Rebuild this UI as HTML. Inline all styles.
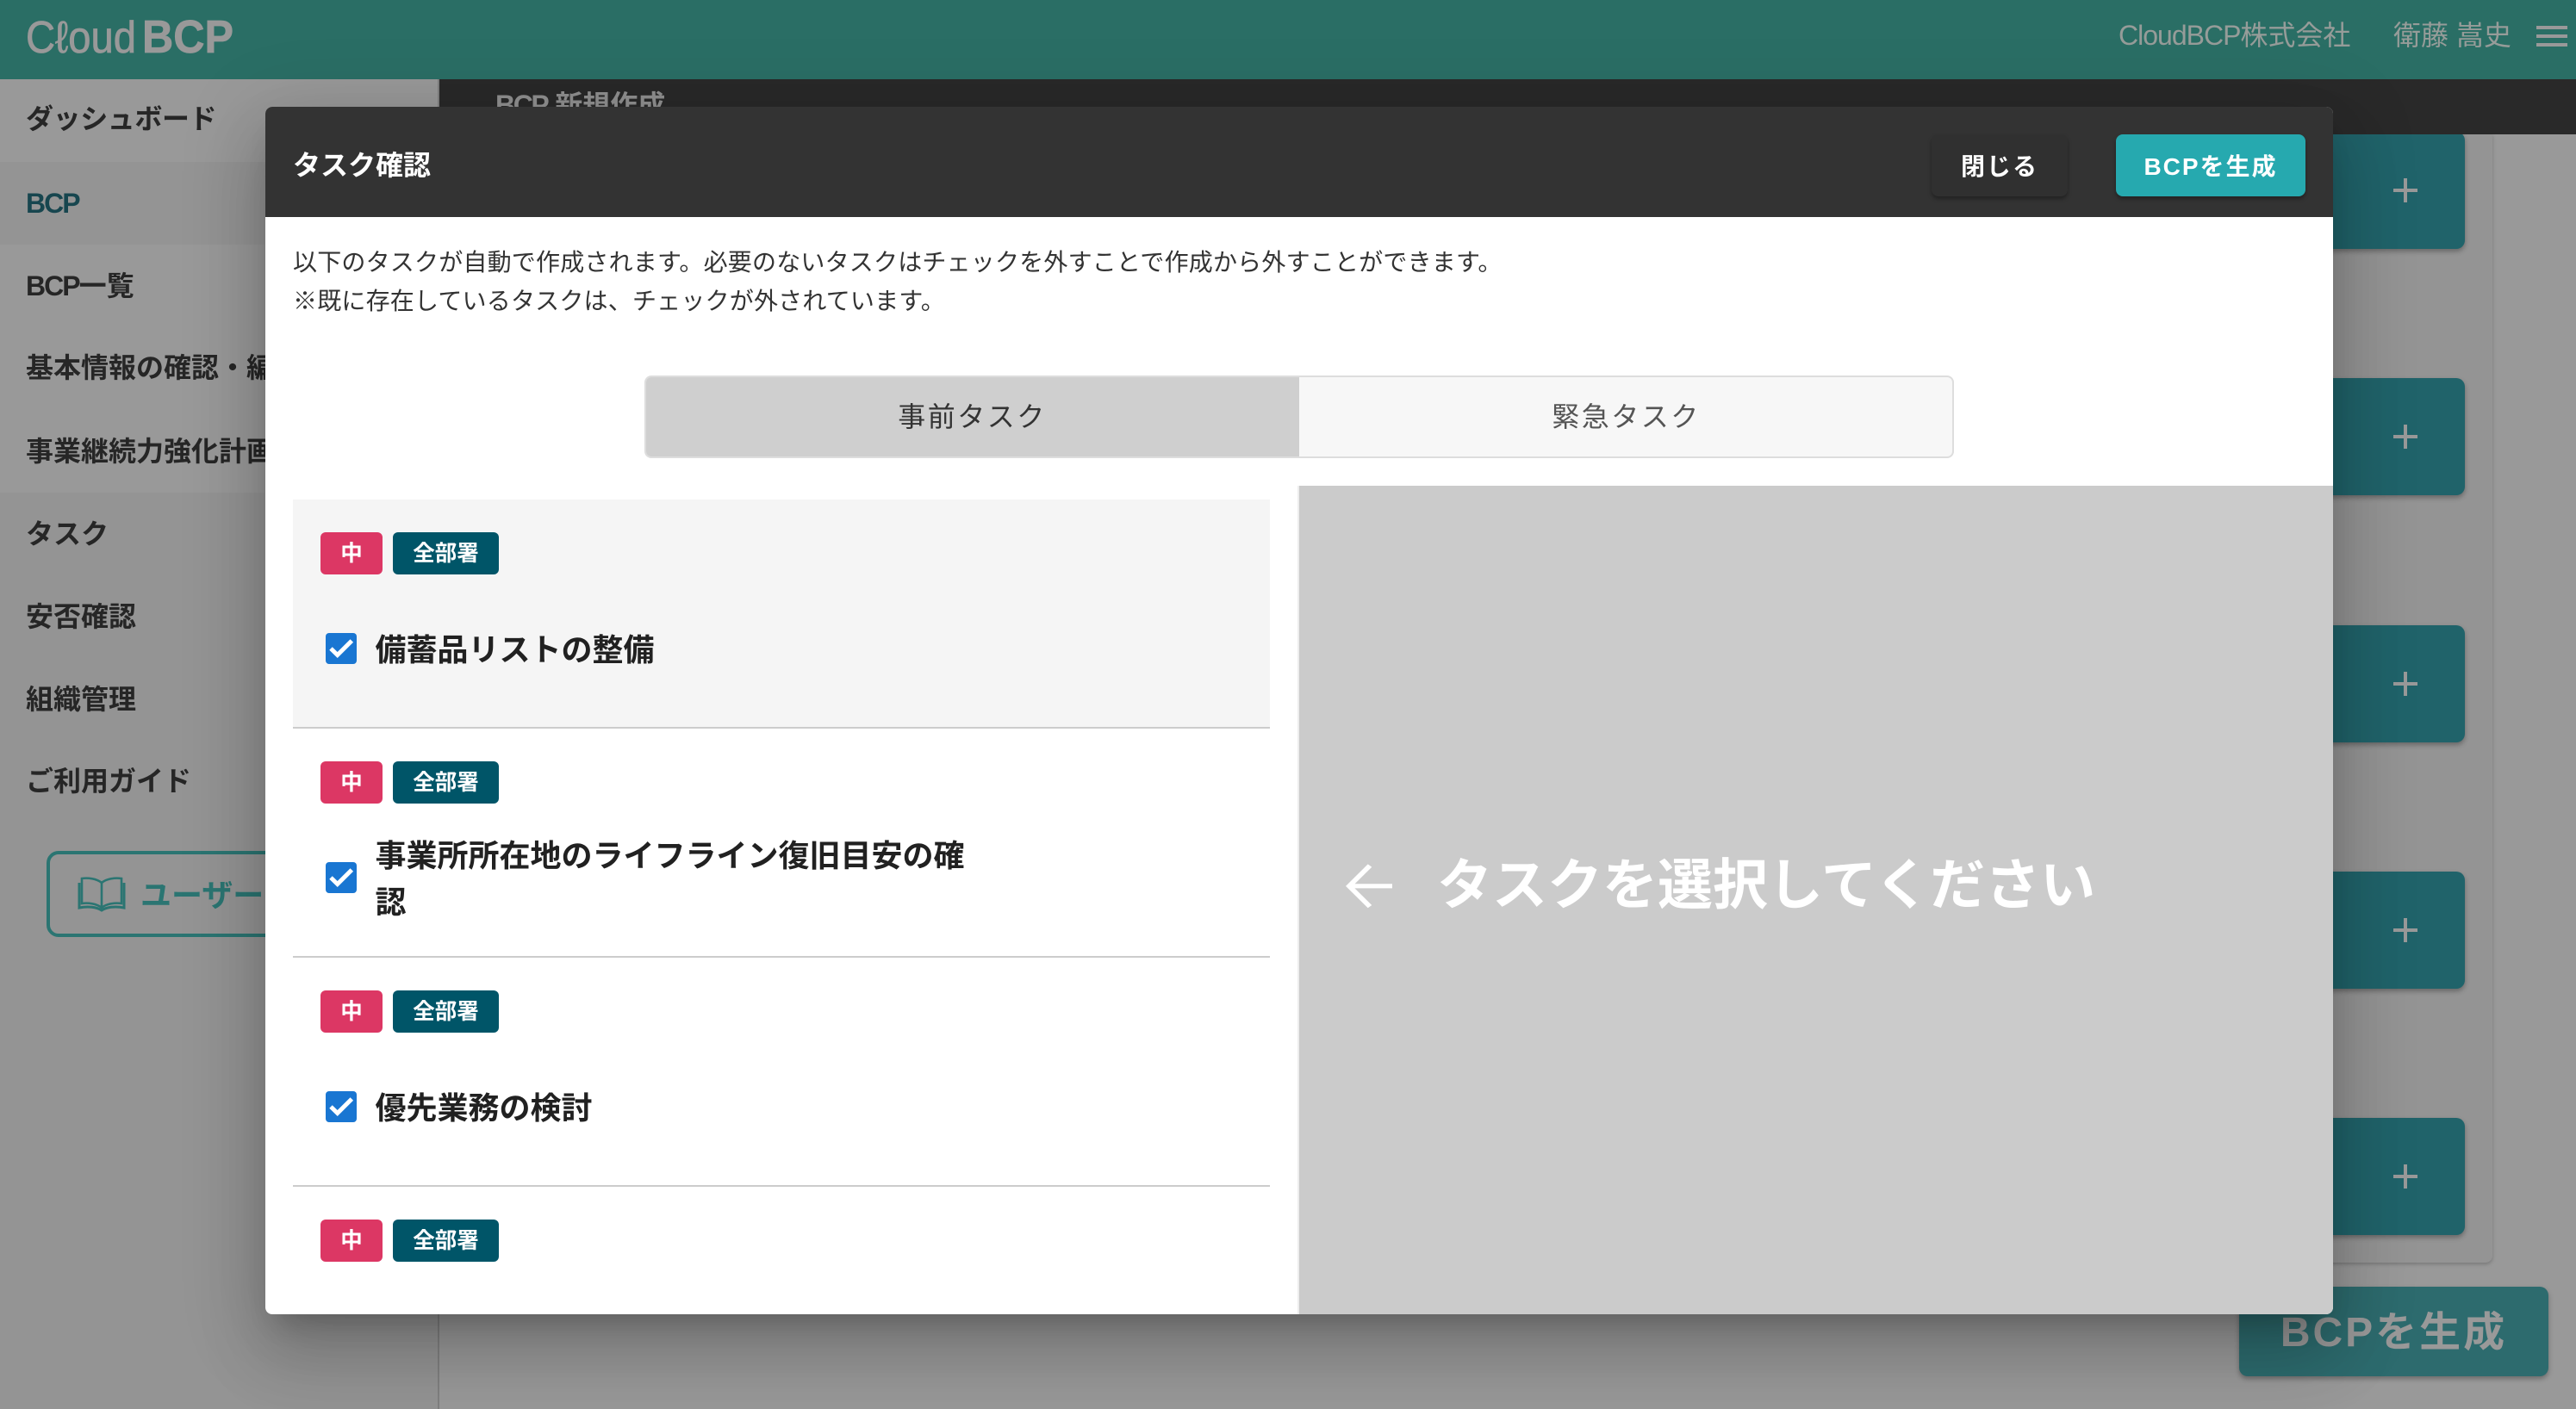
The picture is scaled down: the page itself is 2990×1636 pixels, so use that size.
<!DOCTYPE html>
<html lang="ja">
<head>
<meta charset="utf-8">
<title>CloudBCP</title>
<style>
html,body{margin:0;padding:0;width:2990px;height:1636px;overflow:hidden;background:#999;}
*{box-sizing:border-box;}
body{font-family:"Liberation Sans","Noto Sans CJK JP",sans-serif;position:relative;}
.a{position:absolute;white-space:nowrap;}
.nav{position:absolute;left:30px;font-size:32px;line-height:44px;font-weight:700;color:#262626;white-space:nowrap;}
.lat{letter-spacing:-2.4px;}
.add{position:absolute;left:2400px;width:461px;height:136px;background:#20636a;border-radius:0 10px 10px 0;box-shadow:0 3px 6px rgba(0,0,0,.3);}
.add:before{content:"";position:absolute;left:378px;top:66px;width:28px;height:4px;background:#999;}
.add:after{content:"";position:absolute;left:390px;top:54px;width:4px;height:28px;background:#999;}
.item{position:absolute;left:32px;width:1134px;height:266px;border-bottom:2px solid #ccc;}
.chip{position:absolute;top:38px;height:49px;border-radius:6px;color:#fff;font-size:25.5px;line-height:51px;text-align:center;font-weight:700;}
.c1{left:32px;width:72px;background:#dc3764;}
.c2{left:116px;width:123px;background:#005568;}
.cb{position:absolute;left:38px;width:36px;height:36px;}
.lbl{position:absolute;left:95.5px;width:700px;font-size:36px;line-height:54px;font-weight:700;color:#212121;}
</style>
</head>
<body>
<!-- app header -->
<div class="a" style="left:0;top:0;width:2990px;height:92px;background:#2a6e65;"></div>
<svg class="a" style="left:0;top:0;" width="300" height="92" viewBox="0 0 300 92">
  <text x="30" y="61" font-family="Liberation Sans" font-size="52" fill="#999" stroke="#999" stroke-width=".8" textLength="128" lengthAdjust="spacingAndGlyphs">Cℓoud</text>
  <text x="165" y="61" font-family="Liberation Sans" font-size="54" font-weight="700" fill="#999" stroke="#999" stroke-width=".8" textLength="106" lengthAdjust="spacingAndGlyphs">BCP</text>
</svg>
<div class="a" style="left:2459px;top:19px;font-size:32px;line-height:44px;color:#969c99;"><span style="letter-spacing:-1px;">CloudBCP</span>株式会社</div>
<div class="a" style="left:2778px;top:19px;font-size:32px;line-height:44px;color:#969c99;">衛藤 嵩史</div>
<div class="a" style="left:2944px;top:30px;width:36px;height:4px;background:#999;"></div>
<div class="a" style="left:2944px;top:40px;width:36px;height:4px;background:#999;"></div>
<div class="a" style="left:2944px;top:50px;width:36px;height:4px;background:#999;"></div>

<!-- sidebar -->
<div class="a" style="left:0;top:92px;width:510px;height:1544px;background:#949494;border-right:2px solid #808080;"></div>
<div class="a" style="left:0;top:284px;width:508px;height:288px;background:#999;"></div>
<div class="a" style="left:0;top:92px;width:508px;height:96px;background:#999;"></div>
<div class="nav" style="top:116px;letter-spacing:-.4px;">ダッシュボード</div>
<div class="nav" style="top:214px;color:#17464f;"><span style="letter-spacing:-2px;">BCP</span></div>
<div class="nav" style="top:310px;"><span style="letter-spacing:-2px;">BCP</span>一覧</div>
<div class="nav" style="top:405px;">基本情報の確認・編集</div>
<div class="nav" style="top:502px;">事業継続力強化計画</div>
<div class="nav" style="top:598px;">タスク</div>
<div class="nav" style="top:694px;">安否確認</div>
<div class="nav" style="top:790px;">組織管理</div>
<div class="nav" style="top:885px;">ご利用ガイド</div>
<div class="a" style="left:54px;top:988px;width:560px;height:100px;border:4px solid #2b7572;border-radius:14px;"></div>
<svg class="a" style="left:89px;top:1018px;" width="58" height="42" viewBox="0 0 58 42" fill="none" stroke="#2b7572">
  <path stroke-width="2.6" d="M29 7C23 2 13 1 6 2V31C13 30 23 31 29 36C35 31 45 30 52 31V2C45 1 35 2 29 7ZM29 7V36"/>
  <path stroke-width="3" d="M3 7V36C13 34 23 35 29 39C35 35 45 34 55 36V7"/>
</svg>
<div class="a" style="left:163px;top:1015px;font-size:36px;line-height:50px;font-weight:700;color:#2b7572;">ユーザーガイド</div>

<!-- page content -->
<div class="a" style="left:510px;top:156px;width:2383px;height:1310px;background:#949494;border-radius:0 0 8px 0;box-shadow:0 2px 4px rgba(0,0,0,.22);"></div>
<div class="add" style="top:153px;"></div>
<div class="add" style="top:439px;"></div>
<div class="add" style="top:726px;"></div>
<div class="add" style="top:1012px;"></div>
<div class="add" style="top:1298px;"></div>
<div class="a" style="left:510px;top:92px;width:2480px;height:64px;background:#292929;"></div>
<div class="a" style="left:575px;top:100px;font-size:32px;line-height:44px;font-weight:700;color:#909090;"><span class="lat">BCP</span> 新規作成</div>
<div class="a" style="left:2599px;top:1494px;width:359px;height:104px;background:#2d6b6e;border-radius:10px;box-shadow:0 3px 6px rgba(0,0,0,.3);color:#999;font-size:48px;line-height:108px;font-weight:700;text-align:center;letter-spacing:3px;">BCPを生成</div>

<!-- modal -->
<div class="a" style="left:308px;top:124px;width:2400px;height:1402px;background:#fff;border-radius:8px;overflow:hidden;box-shadow:0 22px 30px -14px rgba(0,0,0,.2),0 48px 76px 6px rgba(0,0,0,.14),0 18px 92px 16px rgba(0,0,0,.12);">
  <div class="a" style="left:0;top:0;width:2400px;height:128px;background:#333;"></div>
  <div class="a" style="left:32px;top:46px;font-size:32px;line-height:44px;font-weight:700;color:#fff;">タスク確認</div>
  <div class="a" style="left:1934px;top:32px;width:158px;height:72px;background:#303030;border-radius:8px;box-shadow:0 3px 5px rgba(0,0,0,.35);color:#fff;font-size:28px;line-height:76px;text-align:center;font-weight:700;letter-spacing:2px;">閉じる</div>
  <div class="a" style="left:2148px;top:32px;width:220px;height:72px;background:#26a9af;border-radius:8px;box-shadow:0 3px 5px rgba(0,0,0,.35);color:#fff;font-size:28px;line-height:76px;text-align:center;font-weight:700;letter-spacing:2px;">BCPを生成</div>

  <div class="a" style="left:32px;top:159px;font-size:28px;line-height:44px;color:#333;letter-spacing:.2px;">以下のタスクが自動で作成されます。必要のないタスクはチェックを外すことで作成から外すことができます。</div>
  <div class="a" style="left:32px;top:204px;font-size:28px;line-height:44px;color:#333;letter-spacing:.2px;">※既に存在しているタスクは、チェックが外されています。</div>

  <div class="a" style="left:440px;top:312px;width:1520px;height:96px;background:#f7f7f7;border:2px solid #ddd;border-radius:8px;"></div>
  <div class="a" style="left:442px;top:314px;width:758px;height:92px;background:#cfcfcf;border-radius:6px 0 0 6px;"></div>
  <div class="a" style="left:441px;top:336px;width:759px;font-size:32px;line-height:48px;letter-spacing:2.5px;text-align:center;color:#333;">事前タスク</div>
  <div class="a" style="left:1200px;top:336px;width:759px;font-size:32px;line-height:48px;letter-spacing:2.5px;text-align:center;color:#555;">緊急タスク</div>

  <!-- list -->
  <div class="item" style="top:456px;background:#f5f5f5;">
    <div class="chip c1">中</div><div class="chip c2">全部署</div>
    <svg class="cb" style="top:155px;" viewBox="0 0 36 36"><rect width="36" height="36" rx="4" fill="#1976d2"/><path d="M6 18L13.7 25.5L30.3 9" fill="none" stroke="#fff" stroke-width="5"/></svg>
    <div class="lbl" style="top:148px;">備蓄品リストの整備</div>
  </div>
  <div class="item" style="top:722px;">
    <div class="chip c1">中</div><div class="chip c2">全部署</div>
    <svg class="cb" style="top:155px;" viewBox="0 0 36 36"><rect width="36" height="36" rx="4" fill="#1976d2"/><path d="M6 18L13.7 25.5L30.3 9" fill="none" stroke="#fff" stroke-width="5"/></svg>
    <div class="lbl" style="top:121px;">事業所所在地のライフライン復旧目安の確<br>認</div>
  </div>
  <div class="item" style="top:988px;">
    <div class="chip c1">中</div><div class="chip c2">全部署</div>
    <svg class="cb" style="top:155px;" viewBox="0 0 36 36"><rect width="36" height="36" rx="4" fill="#1976d2"/><path d="M6 18L13.7 25.5L30.3 9" fill="none" stroke="#fff" stroke-width="5"/></svg>
    <div class="lbl" style="top:148px;">優先業務の検討</div>
  </div>
  <div class="item" style="top:1254px;border-bottom:none;">
    <div class="chip c1">中</div><div class="chip c2">全部署</div>
  </div>

  <!-- right pane -->
  <div class="a" style="left:1198px;top:440px;width:2px;height:962px;background:#eee;"></div>
  <div class="a" style="left:1200px;top:440px;width:1200px;height:962px;background:#cbcbcb;"></div>
  <svg class="a" style="left:1252px;top:870px;" width="58" height="70" viewBox="0 0 58 70" fill="none" stroke="#fff" stroke-width="6"><path d="M56 35H6M30 7L6 35L30 63" transform="translate(0 0) scale(1 .85) translate(0 6)"/></svg>
  <div class="a" style="left:1360px;top:862px;font-size:64px;line-height:84px;font-weight:700;color:#fff;">タスクを選択してください</div>
</div>
</body>
</html>
